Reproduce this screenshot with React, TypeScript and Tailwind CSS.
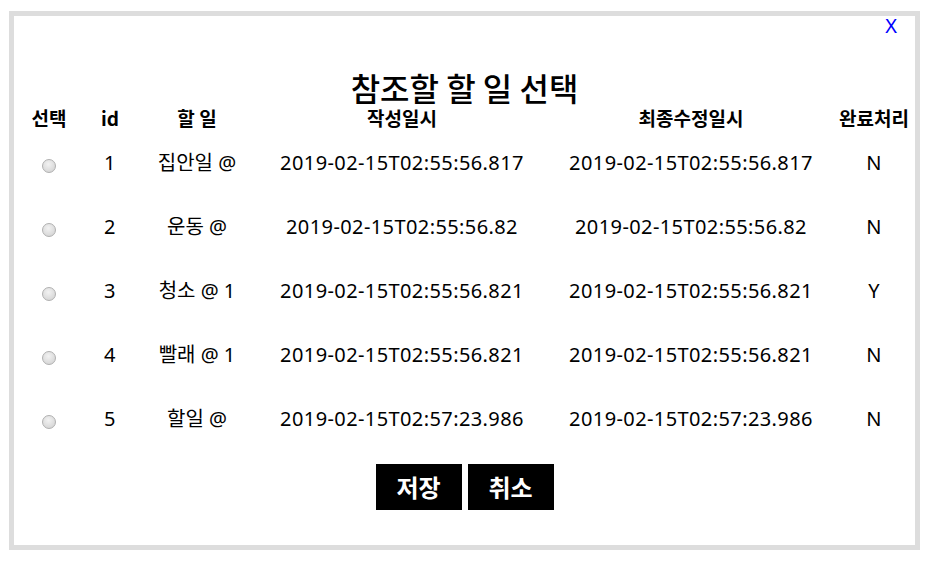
import React from "react";

const rows = [
  { id: 1, todo: "집안일 @", created: "2019-02-15T02:55:56.817", updated: "2019-02-15T02:55:56.817", done: "N" },
  { id: 2, todo: "운동 @", created: "2019-02-15T02:55:56.82", updated: "2019-02-15T02:55:56.82", done: "N" },
  { id: 3, todo: "청소 @ 1", created: "2019-02-15T02:55:56.821", updated: "2019-02-15T02:55:56.821", done: "Y" },
  { id: 4, todo: "빨래 @ 1", created: "2019-02-15T02:55:56.821", updated: "2019-02-15T02:55:56.821", done: "N" },
  { id: 5, todo: "할일 @", created: "2019-02-15T02:57:23.986", updated: "2019-02-15T02:57:23.986", done: "N" },
];

const grid = "grid grid-cols-[70px_52px_122px_288px_290px_76px]";

export default function App() {
  return (
    <div
      className="w-[935px] h-[567px] bg-white pt-[11px] pl-[9px]"
      style={{ fontFamily: '"Noto Sans", "Noto Sans CJK KR", sans-serif' }}
    >
      <div className="w-[911px] h-[539px] border-[5px] border-[#dddddd] flex flex-col text-black">
        <div className="h-[53px] flex justify-end items-start pr-[18px]">
          <span className="text-[20px] leading-[20px] text-[#0000ff]">X</span>
        </div>
        <h1 className="h-[36px] leading-[36px] flex items-center justify-center text-[32px] font-medium" style={{ fontFamily: '"Noto Sans CJK KR", sans-serif' }}>
          참조할 할 일 선택
        </h1>
        <div className={`${grid} h-[26px] leading-[26px] items-center text-center text-[19px] font-bold`} style={{ fontFamily: '"Noto Sans CJK KR", sans-serif' }}>
          <div>선택</div>
          <div>id</div>
          <div>할 일</div>
          <div>작성일시</div>
          <div>최종수정일시</div>
          <div>완료처리</div>
        </div>
        {rows.map((r) => (
          <div key={r.id} className={`${grid} h-[64px] items-center text-center text-[20px] tracking-[0.4px]`}>
            <div className="flex justify-center pt-[6px]">
              <span className="w-[14px] h-[14px] rounded-full border border-[#b0b0b0] bg-[radial-gradient(circle_at_45%_35%,#f2f2f2,#cfcfcf)]" />
            </div>
            <div>{r.id}</div>
            <div className="tracking-normal">{r.todo}</div>
            <div>{r.created}</div>
            <div>{r.updated}</div>
            <div>{r.done}</div>
          </div>
        ))}
        <div className="flex justify-center gap-[6px] mt-[13px]">
          <button className="w-[86px] h-[46px] bg-black text-white text-[24px] font-bold flex items-center justify-center" style={{ fontFamily: '"Noto Sans CJK KR", sans-serif' }}>
            저장
          </button>
          <button className="w-[86px] h-[46px] bg-black text-white text-[24px] font-bold flex items-center justify-center" style={{ fontFamily: '"Noto Sans CJK KR", sans-serif' }}>
            취소
          </button>
        </div>
      </div>
    </div>
  );
}
